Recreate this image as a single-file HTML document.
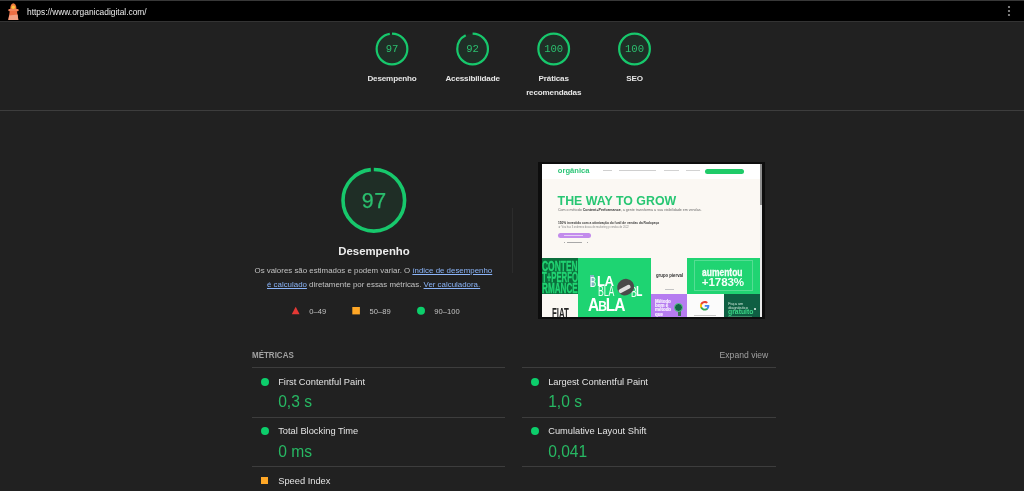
<!DOCTYPE html>
<html><head><meta charset="utf-8">
<style>
*{margin:0;padding:0;box-sizing:border-box}
html,body{width:1024px;height:491px;overflow:hidden;background:#212121;will-change:transform;font-family:"Liberation Sans",sans-serif;color:#e0e0e0}
.a{position:absolute;white-space:nowrap;line-height:1}
#topbar{position:absolute;left:0;top:0;width:1024px;height:22px;background:#000;border-top:1px solid #383838;border-bottom:1px solid #333}
.hl{position:absolute;height:1px;background:#3d3d3d}
.lbl{font-size:8.1px;font-weight:bold;color:#e6e6e6;text-align:center;width:90px;letter-spacing:-0.17px}
.gnum{font-family:"Liberation Mono",monospace;font-size:10.6px;color:#2bbf6e;text-align:center;width:40px}
.desc{font-size:7.9px;color:#c2c2c2}
.lnk{color:#8ab4f8;text-decoration:underline}
.mt{font-size:9.3px;color:#e3e3e3}
.mv{font-size:15.6px;color:#27b863}
.dot{position:absolute;width:8px;height:8px;border-radius:50%;background:#0cce6b}
</style></head><body>
<div id="topbar"></div>
<svg class="a" style="left:0;top:0" width="26" height="24" viewBox="0 0 26 24">
  <path d="M10.2 9.2 C10.2 5.5 11.6 3.3 13.3 3.3 C15 3.3 16.5 5.5 16.5 9.2 Z" fill="#f07a3e"/>
  <circle cx="13.3" cy="7.2" r="1.7" fill="#ffc53d"/>
  <rect x="8.3" y="8.9" width="10.4" height="2.3" rx="1" fill="#f2835a"/>
  <path d="M9.8 11 L16.9 11 L18.3 19.9 L8.3 19.9 Z" fill="#ee6f45"/>
  <path d="M9.2 15.5 L17.6 14.5 L18.3 19.9 L8.3 19.9 Z" fill="#f3a184"/>
</svg>
<div class="a" style="left:27px;top:8.2px;font-size:8.4px;color:#ececec">https://www.organicadigital.com/</div>
<svg class="a" style="left:1006px;top:5px" width="6" height="12" viewBox="0 0 6 12">
  <circle cx="3" cy="2" r="1.1" fill="#9a9a9a"/><circle cx="3" cy="6" r="1.1" fill="#9a9a9a"/><circle cx="3" cy="10" r="1.1" fill="#9a9a9a"/>
</svg>

<!-- small gauges -->
<svg class="a" style="left:0;top:0" width="1024" height="110">
  <g fill="rgba(12,206,107,0.08)" stroke="#17c86c" stroke-width="2.2" stroke-linecap="butt">
    <circle cx="392" cy="49" r="15.35" stroke="none"/>
    <circle cx="472.6" cy="49" r="15.35" stroke="none"/>
    <circle cx="553.7" cy="49" r="15.35" stroke="none"/>
    <circle cx="634.5" cy="49" r="15.35" stroke="none"/>
    <circle cx="392" cy="49" r="15.35" fill="none" stroke-dasharray="93.55 200" transform="rotate(-90 392 49)"/>
    <circle cx="472.6" cy="49" r="15.35" fill="none" stroke-dasharray="88.7 200" transform="rotate(-90 472.6 49)"/>
    <circle cx="553.7" cy="49" r="15.35" fill="none"/>
    <circle cx="634.5" cy="49" r="15.35" fill="none"/>
  </g>
</svg>
<div class="a gnum" style="left:372px;top:44px">97</div>
<div class="a gnum" style="left:452.6px;top:44px">92</div>
<div class="a gnum" style="left:533.7px;top:44px">100</div>
<div class="a gnum" style="left:614.5px;top:44px">100</div>
<div class="a lbl" style="left:347px;top:75.2px">Desempenho</div>
<div class="a lbl" style="left:427.6px;top:75.2px">Acessibilidade</div>
<div class="a lbl" style="left:508.7px;top:75.2px">Práticas</div>
<div class="a lbl" style="left:508.7px;top:89px">recomendadas</div>
<div class="a lbl" style="left:589.5px;top:75.2px">SEO</div>
<div class="hl" style="left:0;top:110px;width:1024px"></div>

<!-- big gauge -->
<svg class="a" style="left:330px;top:156px" width="90" height="90">
  <circle cx="43.8" cy="44.3" r="30.8" fill="rgba(12,206,107,0.08)"/>
  <circle cx="43.8" cy="44.3" r="30.8" fill="none" stroke="#17c86c" stroke-width="3.6" stroke-linecap="butt" stroke-dasharray="190.2 300" transform="rotate(-90 43.8 44.3)"/>
</svg>
<div class="a" style="left:344.3px;top:190.9px;width:60px;text-align:center;font-size:21.4px;letter-spacing:0.6px;color:#2bbf6e;-webkit-text-stroke:0.25px #2bbf6e">97</div>
<div class="a" style="left:314px;top:246px;width:120px;text-align:center;font-size:11.4px;font-weight:bold;color:#ececec">Desempenho</div>
<div class="a desc" style="left:254.5px;top:266.7px">Os valores são estimados e podem variar. O <span class="lnk">índice de desempenho</span></div>
<div class="a desc" style="left:267px;top:280.8px"><span class="lnk">é calculado</span> diretamente por essas métricas. <span class="lnk">Ver calculadora.</span></div>

<svg class="a" style="left:290px;top:305px" width="140" height="12">
  <path d="M5.7 1.8 L9.6 9.2 L1.8 9.2 Z" fill="#e53935"/>
  <rect x="62.3" y="2" width="7.6" height="7.4" fill="#ffa726"/>
  <circle cx="131" cy="5.7" r="4" fill="#0cce6b"/>
</svg>
<div class="a desc" style="left:309.3px;top:307.6px;font-size:7.6px">0–49</div>
<div class="a desc" style="left:369.6px;top:307.6px;font-size:7.6px">50–89</div>
<div class="a desc" style="left:434.3px;top:307.6px;font-size:7.6px">90–100</div>

<div class="hl" style="left:512px;top:208px;width:1px;height:65px;background:#2c2c2c"></div>

<!-- screenshot -->
<div class="a" style="left:538px;top:161.8px;width:227px;height:157.5px;background:#0d0d0d"></div>
<div class="a" style="left:541.8px;top:163.6px;width:220.6px;height:153.1px;background:#fbf8f3;overflow:hidden;font-family:'Liberation Sans',sans-serif">
  <div class="a" style="left:0;top:0;width:218px;height:15.2px;background:#fff"></div>
  <div class="a" style="left:16px;top:3.6px;font-size:7.6px;font-weight:bold;color:#2cc577;letter-spacing:0">orgânica</div>
  <div class="a" style="left:61.5px;top:6.7px;width:8.3px;height:1px;background:#cfcfcf"></div>
  <div class="a" style="left:77.1px;top:6.7px;width:37px;height:1px;background:#cfcfcf"></div>
  <div class="a" style="left:122px;top:6.7px;width:15.5px;height:1px;background:#d2d2d2"></div>
  <div class="a" style="left:144px;top:6.7px;width:14.6px;height:1px;background:#d2d2d2"></div>
  <div class="a" style="left:163.2px;top:5.6px;width:38.9px;height:5.1px;border-radius:3px;background:#1fcb68"></div>
  <div class="a" style="left:218.2px;top:0;width:2.4px;height:153px;background:#e9e9e9"></div>
  <div class="a" style="left:218.2px;top:0.5px;width:2.4px;height:40.5px;background:#8d8d8d"></div>
  <div class="a" style="left:15.8px;top:31.9px;font-size:12.37px;font-weight:bold;color:#27c673">THE WAY TO GROW</div>
  <div class="a" style="left:16.1px;top:45.6px;font-size:3.64px;color:#6a6a6a">Com o método <b style="color:#333">Content+Performance</b>, a gente transforma a sua visibilidade em vendas.</div>
  <div class="a" style="left:16.1px;top:58.8px;font-size:3.23px;font-weight:bold;color:#3a3a3a">150% investido com a otimização do funil de vendas da Rodopeça</div>
  <div class="a" style="left:16.1px;top:63.3px;font-size:2.6px;color:#8a8a8a">★ Vou has 3 ordemeo dosas de marketing p vendas de 2022</div>
  <div class="a" style="left:16.1px;top:69.4px;width:33.1px;height:5.4px;border-radius:3px;background:#c38cec"></div>
  <div class="a" style="left:22px;top:71.4px;width:19px;height:1.2px;background:#e6d2f7"></div>
  <div class="a" style="left:22.4px;top:78.6px;width:1px;height:1px;background:#aaa"></div><div class="a" style="left:25.4px;top:78.5px;width:13.4px;height:1.1px;background:#a8a8a8"></div><div class="a" style="left:38.8px;top:78.6px;width:1px;height:1px;background:#aaa"></div><div class="a" style="left:45.2px;top:78.6px;width:1px;height:1px;background:#aaa"></div>
  <!-- tiles -->
  <div class="a" style="left:0.2px;top:94.6px;width:36.6px;height:35.6px;background:#0b6f3c;overflow:hidden">
    <div class="a" style="left:0;top:2.7px;font-size:15.5px;line-height:10.9px;font-weight:bold;color:#22d473;-webkit-text-stroke:0.35px #22d473">
      <div style="height:10.9px;transform:scaleX(0.545);transform-origin:0 0">CONTEN</div>
      <div style="height:10.9px;transform:scaleX(0.5);transform-origin:0 0">T+PERFO</div>
      <div style="height:10.9px;transform:scaleX(0.525);transform-origin:0 0">RMANCE</div></div>
  </div>
  <div class="a" style="left:0;top:130.2px;width:36.6px;height:23px;background:#fbf8f3">
    <div class="a" style="left:10.1px;top:11.9px;font-size:14px;font-weight:bold;color:#262626;transform:scaleX(0.56);transform-origin:0 0">FIAT</div>
  </div>
  <div class="a" style="left:36.6px;top:94.6px;width:72.4px;height:59px;background:#1ed472;overflow:hidden">
    <div class="a" style="left:11.4px;top:17px;width:4.2px;height:12px;background:#86b3c4"></div>
    <div class="a" style="left:12px;top:15.4px;font-size:15px;color:#effff4;transform:scaleX(0.62);transform-origin:0 0">B</div>
    <div class="a" style="left:18.5px;top:14.6px;font-size:15.5px;font-weight:bold;color:#fff;transform:scaleX(0.85);transform-origin:0 0;letter-spacing:-0.5px">LA</div>
    <div class="a" style="left:20px;top:25.8px;font-size:14px;color:#f0fff5;transform:scaleX(0.62);transform-origin:0 0">BLA</div>
    <div class="a" style="left:52.5px;top:26.5px;font-size:14px;color:#f0fff5;transform:scaleX(0.62);transform-origin:0 0">B</div>
    <div class="a" style="left:57.5px;top:26.3px;font-size:14px;font-weight:bold;color:#fff;transform:scaleX(0.75);transform-origin:0 0">L</div>
    <div class="a" style="left:39px;top:21px;width:17px;height:16px;border-radius:50% 50% 45% 45%;background:#4a4a4a;transform:rotate(-35deg)"></div>
    <div class="a" style="left:40px;top:29px;width:13px;height:3.5px;border-radius:2px;background:#e0e0e0;transform:rotate(-28deg)"></div>
    <div class="a" style="left:9.6px;top:37.4px;font-size:18px;font-weight:bold;color:#fff;transform:scaleX(0.86);transform-origin:0 0;letter-spacing:-1.2px">A<span style="font-size:14px">B</span>LA</div>
  </div>
  <div class="a" style="left:108.9px;top:94.6px;width:36.3px;height:35.6px;background:#fbf8f3">
    <div class="a" style="left:5.2px;top:14.4px;font-size:5.1px;font-weight:bold;color:#2e2e2e;transform:scaleX(0.84);transform-origin:0 0">grupo pierval</div>
    <div class="a" style="left:14px;top:30.8px;width:9px;height:0.8px;background:#c4c4c4"></div>
  </div>
  <div class="a" style="left:108.9px;top:130.2px;width:36.3px;height:23px;background:#b67cf0">
    <div class="a" style="left:4.2px;top:6.2px;font-size:4.7px;line-height:4.2px;font-weight:bold;color:#f7eefe;transform:scaleX(0.95);transform-origin:0 0;-webkit-text-stroke:0.2px #f7eefe">Método<br>bom é<br>método<br>que</div>
    <div class="a" style="left:27.2px;top:17.5px;width:3px;height:5px;background:#3c6e58"></div>
    <div class="a" style="left:23.8px;top:8.8px;width:9px;height:9px;border-radius:50%;background:#136645;border:0.7px solid #5fc990"></div>
  </div>
  <div class="a" style="left:145.4px;top:94.6px;width:72.6px;height:35.6px;background:#20d472">
    <div class="a" style="left:6.5px;top:2px;width:59px;height:31.2px;border:0.5px solid #55dd93"></div>
    <div class="a" style="left:15px;top:8.4px;font-size:10.6px;font-weight:bold;color:#f4fff8;transform:scaleX(0.8);transform-origin:0 0;-webkit-text-stroke:0.3px #f4fff8">aumentou</div>
    <div class="a" style="left:14.6px;top:17.4px;font-size:11.6px;font-weight:bold;color:#f4fff8;letter-spacing:-0.1px">+1783%</div>
  </div>
  <div class="a" style="left:145.4px;top:130.2px;width:36.6px;height:23px;background:#fbfbfb">
    <svg class="a" style="left:12.3px;top:6.2px" width="11.5" height="11.5" viewBox="0 0 24 24"><path d="M21.6 12.2c0-.7-.1-1.4-.2-2H12v3.8h5.4c-.2 1.2-.9 2.3-2 3v2.5h3.2c1.9-1.8 3-4.4 3-7.3z" fill="#4285f4"/><path d="M12 22c2.7 0 5-.9 6.6-2.4l-3.2-2.5c-.9.6-2 1-3.4 1-2.6 0-4.8-1.8-5.6-4.1H3.1v2.6C4.7 19.8 8.1 22 12 22z" fill="#34a853"/><path d="M6.4 14c-.2-.6-.3-1.3-.3-2s.1-1.4.3-2V7.4H3.1C2.4 8.8 2 10.4 2 12s.4 3.2 1.1 4.6L6.4 14z" fill="#fbbc05"/><path d="M12 6c1.5 0 2.8.5 3.8 1.5l2.9-2.9C17 3 14.7 2 12 2 8.1 2 4.7 4.2 3.1 7.4L6.4 10c.8-2.3 3-4 5.6-4z" fill="#ea4335"/></svg>
    <div class="a" style="left:7px;top:21px;width:22px;height:1px;background:#c8c8c8"></div>
  </div>
  <div class="a" style="left:182px;top:130.2px;width:36.2px;height:23px;background:#0f5f43">
    <div class="a" style="left:4.4px;top:8.5px;font-size:3.9px;line-height:3.5px;color:#cfeadb">Faça um<br>diagnóstico</div>
    <div class="a" style="left:4.2px;top:14.2px;font-size:7.2px;font-weight:bold;color:#3bd786;transform:scaleX(0.95);transform-origin:0 0">gratuito</div>
    <div class="a" style="left:29.8px;top:14.4px;width:2.2px;height:2.2px;border-radius:50%;background:#e8f5ee"></div>
    <div class="a" style="left:4.4px;top:22px;width:24px;height:1px;background:#3b8a66"></div>
  </div>
</div>

<!-- metrics -->
<div class="a" style="left:251.8px;top:350.9px;font-size:8.6px;font-weight:bold;color:#a2a2a2;transform:scaleX(0.93);transform-origin:0 0">MÉTRICAS</div>
<div class="a" style="left:719.6px;top:351px;font-size:8.6px;color:#a0a0a0">Expand view</div>
<div class="hl" style="left:251.5px;top:367px;width:253.5px"></div>
<div class="hl" style="left:521.5px;top:367px;width:254px"></div>
<div class="hl" style="left:251.5px;top:417px;width:253.5px"></div>
<div class="hl" style="left:521.5px;top:417px;width:254px"></div>
<div class="hl" style="left:251.5px;top:466px;width:253.5px"></div>
<div class="hl" style="left:521.5px;top:466px;width:254px"></div>

<div class="dot" style="left:260.5px;top:377.5px"></div>
<div class="a mt" style="left:278.2px;top:378px">First Contentful Paint</div>
<div class="a mv" style="left:278.2px;top:394.3px">0,3 s</div>
<div class="dot" style="left:531px;top:377.5px"></div>
<div class="a mt" style="left:548.2px;top:378px">Largest Contentful Paint</div>
<div class="a mv" style="left:548.2px;top:394.3px">1,0 s</div>

<div class="dot" style="left:260.5px;top:427px"></div>
<div class="a mt" style="left:278.2px;top:427.1px">Total Blocking Time</div>
<div class="a mv" style="left:278.2px;top:444.2px">0 ms</div>
<div class="dot" style="left:531px;top:427px"></div>
<div class="a mt" style="left:548.2px;top:427.1px">Cumulative Layout Shift</div>
<div class="a mv" style="left:548.2px;top:444.2px">0,041</div>

<div class="a" style="left:260.7px;top:477.2px;width:7.3px;height:7.2px;background:#ffa726"></div>
<div class="a mt" style="left:278.2px;top:477.1px">Speed Index</div>
</body></html>
